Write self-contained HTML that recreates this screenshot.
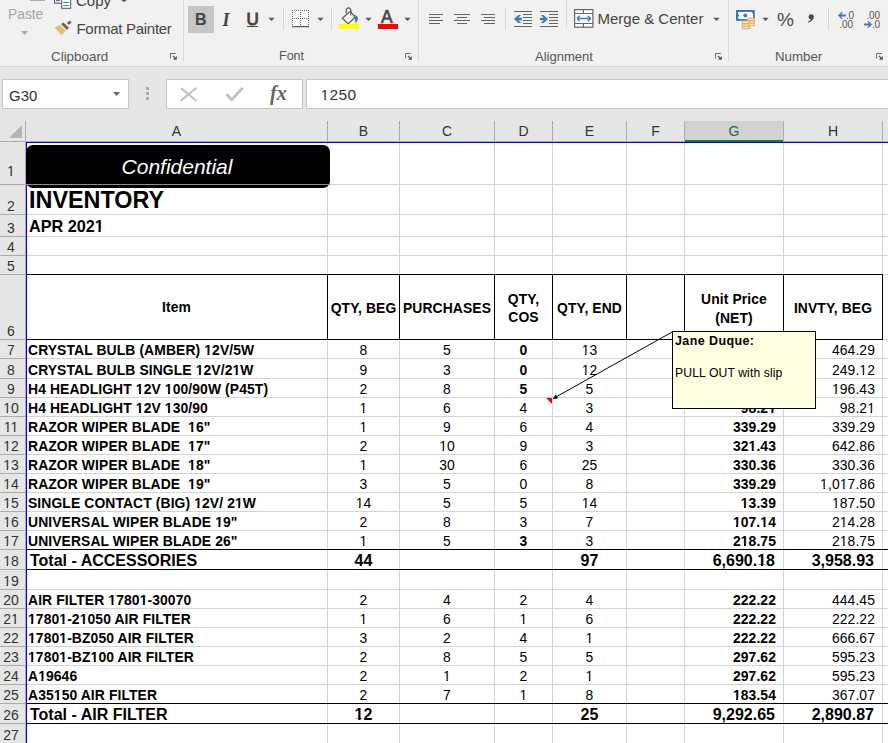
<!DOCTYPE html><html><head><meta charset="utf-8"><style>
*{margin:0;padding:0;box-sizing:border-box}
html,body{width:888px;height:743px;overflow:hidden;background:#fff;position:relative;font-family:"Liberation Sans",sans-serif}
.ab{position:absolute}
.t{position:absolute;white-space:pre;line-height:1}
.c{position:absolute;white-space:pre;font-size:13.9px;letter-spacing:0.1px;color:#000;line-height:14px;height:14px}
.b{font-weight:bold}
.hl{position:absolute;height:1px}
.vl{position:absolute;width:1px}
.o1{clip-path:polygon(0 0,100% 0,100% 0.82em,0.345em 0.82em,0.345em 100%,0.245em 100%,0.245em 0.82em,0 0.82em)}
.o1b{clip-path:polygon(0 0,100% 0,100% 0.775em,0.375em 0.775em,0.375em 100%,0.228em 100%,0.228em 0.775em,0 0.775em)}
</style></head><body>
<div class="ab" style="left:0;top:0;width:888px;height:66px;background:#f1f1f1"></div>
<div class="ab" style="left:0;top:66px;width:888px;height:1px;background:#d5d5d5"></div>
<div class="ab" style="left:0;top:67px;width:888px;height:75px;background:#e6e6e6"></div>
<div class="vl" style="left:183px;top:0;height:62px;background:#d8d8d8"></div>
<div class="vl" style="left:418px;top:0;height:62px;background:#d8d8d8"></div>
<div class="vl" style="left:728px;top:0;height:62px;background:#d8d8d8"></div>
<div class="vl" style="left:283px;top:8px;height:22px;background:#d6d6d6"></div>
<div class="vl" style="left:331px;top:8px;height:22px;background:#d6d6d6"></div>
<div class="vl" style="left:505px;top:8px;height:22px;background:#d6d6d6"></div>
<div class="vl" style="left:566px;top:0px;height:28px;background:#d6d6d6"></div>
<div class="vl" style="left:828px;top:8px;height:22px;background:#d6d6d6"></div>
<div class="ab" style="left:30px;top:0;width:15px;height:1px;background:#a8a8a8"></div>
<div class="t" style="left:8px;top:7.5px;font-size:13.8px;color:#a6a6a6">Paste</div>
<svg class="ab" style="left:21px;top:31px" width="8" height="5"><path d="M0 0H7L3.5 4z" fill="#a8a8a8"/></svg>
<svg class="ab" style="left:53px;top:0px" width="20" height="10"><path d="M1.5 0V3.2H8.5" fill="none" stroke="#555" stroke-width="1"/><rect x="3.1" y="0" width="3.8" height="1.2" fill="#3e7ac1"/><rect x="8.7" y="-2" width="9" height="10.3" fill="#fff" stroke="#555" stroke-width="1"/><path d="M10.3 2.5h5.4M10.3 5.4h5.4" stroke="#3e7ac1" stroke-width="1"/></svg>
<div class="t" style="left:76px;top:-7px;font-size:15px;color:#444">Copy</div>
<svg class="ab" style="left:121px;top:0px" width="6" height="2"><path d="M0 0H6L3 2z" fill="#555"/></svg>
<svg class="ab" style="left:50px;top:16px" width="24" height="22"><path d="M4.4 11.3L9.8 9.1L16 14.7L11.5 19.3z" fill="#e8bd6e"/><path d="M11.1 8.1L13.5 6.4L18.9 11.8L16.9 13.9z" fill="#626262"/><path d="M16.9 7.3L19.4 4.4L21.6 6.4L18.9 8.8z" fill="#626262"/></svg>
<div class="t" style="left:76.5px;top:21.2px;font-size:15px;letter-spacing:-0.3px;color:#444">Format Painter</div>
<div class="t" style="left:51px;top:50px;font-size:13.4px;color:#555">Clipboard</div>
<svg class="ab" style="left:170px;top:53px" width="8" height="8"><path d="M0.5 5.5V0.5H5.8" fill="none" stroke="#6a6a6a" stroke-width="1"/><path d="M3 3L5.5 5.5" stroke="#555" stroke-width="1.2"/><path d="M3 6.8H6.8V3z" fill="#555"/></svg>
<svg class="ab" style="left:405px;top:53px" width="8" height="8"><path d="M0.5 5.5V0.5H5.8" fill="none" stroke="#6a6a6a" stroke-width="1"/><path d="M3 3L5.5 5.5" stroke="#555" stroke-width="1.2"/><path d="M3 6.8H6.8V3z" fill="#555"/></svg>
<svg class="ab" style="left:715px;top:53px" width="8" height="8"><path d="M0.5 5.5V0.5H5.8" fill="none" stroke="#6a6a6a" stroke-width="1"/><path d="M3 3L5.5 5.5" stroke="#555" stroke-width="1.2"/><path d="M3 6.8H6.8V3z" fill="#555"/></svg>
<svg class="ab" style="left:876px;top:53px" width="8" height="8"><path d="M0.5 5.5V0.5H5.8" fill="none" stroke="#6a6a6a" stroke-width="1"/><path d="M3 3L5.5 5.5" stroke="#555" stroke-width="1.2"/><path d="M3 6.8H6.8V3z" fill="#555"/></svg>
<div class="ab" style="left:188px;top:6px;width:26px;height:27px;background:#c5c5c5"></div>
<div class="t b" style="left:195px;top:12px;font-size:16px;color:#444">B</div>
<div class="t b" style="left:222.5px;top:11px;font-size:18px;color:#444;font-style:italic;font-family:'Liberation Serif'">I</div>
<div class="t" style="left:246.5px;top:10.5px;font-size:17px;color:#444;-webkit-text-stroke:0.9px #444">U</div>
<div class="ab" style="left:247px;top:26px;width:11px;height:1px;background:#444"></div>
<svg class="ab" style="left:268px;top:17px" width="8" height="5"><path d="M0.3 0.7H6.7L3.5 3.9z" fill="#555"/></svg>
<svg class="ab" style="left:317px;top:17px" width="8" height="5"><path d="M0.3 0.7H6.7L3.5 3.9z" fill="#555"/></svg>
<svg class="ab" style="left:365px;top:17px" width="8" height="5"><path d="M0.3 0.7H6.7L3.5 3.9z" fill="#555"/></svg>
<svg class="ab" style="left:404px;top:17px" width="8" height="5"><path d="M0.3 0.7H6.7L3.5 3.9z" fill="#555"/></svg>
<svg class="ab" style="left:762px;top:17px" width="8" height="5"><path d="M0.3 0.7H6.7L3.5 3.9z" fill="#555"/></svg>
<svg class="ab" style="left:713px;top:17px" width="8" height="5"><path d="M0.3 0.7H6.7L3.5 3.9z" fill="#555"/></svg>
<svg class="ab" style="left:291px;top:9px" width="19" height="19"><rect x="1" y="1" width="17" height="17" fill="#fff"/><g fill="#666"><path d="M1 1h1v1h-1zM3 1h1v1h-1zM5 1h1v1h-1zM7 1h1v1h-1zM9 1h1v1h-1zM11 1h1v1h-1zM13 1h1v1h-1zM15 1h1v1h-1zM17 1h1v1h-1z"/><path d="M1 3h1v1h-1zM1 5h1v1h-1zM1 7h1v1h-1zM1 9h1v1h-1zM1 11h1v1h-1zM1 13h1v1h-1zM1 15h1v1h-1z"/><path d="M17 3h1v1h-1zM17 5h1v1h-1zM17 7h1v1h-1zM17 9h1v1h-1zM17 11h1v1h-1zM17 13h1v1h-1zM17 15h1v1h-1z"/><path d="M9 3h1v1h-1zM9 5h1v1h-1zM9 7h1v1h-1zM9 11h1v1h-1zM9 13h1v1h-1zM9 15h1v1h-1z"/><path d="M3 9h1v1h-1zM5 9h1v1h-1zM7 9h1v1h-1zM11 9h1v1h-1zM13 9h1v1h-1zM15 9h1v1h-1zM9 9h1v1h-1z"/></g><rect x="1" y="17" width="17" height="1.2" fill="#555"/></svg>
<svg class="ab" style="left:338px;top:4px" width="24" height="26"><path d="M4.3 14.3L12.4 7.3L17.1 13.5L10.2 19.8z" fill="#fff" stroke="#555" stroke-width="1.2" stroke-linejoin="miter"/><path d="M8.2 9.5V6.2a2.3 2.3 0 0 1 4.6 0V11.5" fill="none" stroke="#555" stroke-width="1.2"/><path d="M15.2 10.8C18.5 11 20.5 13 19.8 15.5C19.3 17 18.5 18.3 17.6 19.5L16.6 13.8z" fill="#3c78b9"/><rect x="1" y="20" width="20.2" height="5" fill="#ffff00"/></svg>
<div class="t" style="left:381px;top:9px;font-size:17.5px;color:#444;-webkit-text-stroke:0.6px #444">A</div>
<div class="ab" style="left:378px;top:24px;width:20px;height:5px;background:#ff0000"></div>
<div class="ab" style="left:429px;top:14px;width:14px;height:1px;background:#626262"></div><div class="ab" style="left:429px;top:17px;width:11px;height:1px;background:#626262"></div><div class="ab" style="left:429px;top:20px;width:14px;height:1px;background:#626262"></div><div class="ab" style="left:429px;top:23px;width:11px;height:1px;background:#626262"></div>
<div class="ab" style="left:454px;top:14px;width:16px;height:1px;background:#626262"></div><div class="ab" style="left:457px;top:17px;width:10px;height:1px;background:#626262"></div><div class="ab" style="left:454px;top:20px;width:16px;height:1px;background:#626262"></div><div class="ab" style="left:457px;top:23px;width:10px;height:1px;background:#626262"></div>
<div class="ab" style="left:481px;top:14px;width:14px;height:1px;background:#626262"></div><div class="ab" style="left:484px;top:17px;width:11px;height:1px;background:#626262"></div><div class="ab" style="left:481px;top:20px;width:14px;height:1px;background:#626262"></div><div class="ab" style="left:484px;top:23px;width:11px;height:1px;background:#626262"></div>
<div class="ab" style="left:514px;top:11px;width:18px;height:1px;background:#626262"></div><div class="ab" style="left:523px;top:14px;width:9px;height:1px;background:#626262"></div><div class="ab" style="left:523px;top:17px;width:9px;height:1px;background:#626262"></div><div class="ab" style="left:523px;top:20px;width:9px;height:1px;background:#626262"></div><div class="ab" style="left:523px;top:23px;width:9px;height:1px;background:#626262"></div><div class="ab" style="left:514px;top:26px;width:18px;height:1px;background:#626262"></div><svg class="ab" style="left:514px;top:15px" width="9" height="9"><path d="M0 4L4.4 0H7.2L4.3 2.8H8V5.2H4.3L7.2 8H4.4z" fill="#3c78b9"/></svg>
<div class="ab" style="left:540px;top:11px;width:18px;height:1px;background:#626262"></div><div class="ab" style="left:549px;top:14px;width:9px;height:1px;background:#626262"></div><div class="ab" style="left:549px;top:17px;width:9px;height:1px;background:#626262"></div><div class="ab" style="left:549px;top:20px;width:9px;height:1px;background:#626262"></div><div class="ab" style="left:549px;top:23px;width:9px;height:1px;background:#626262"></div><div class="ab" style="left:540px;top:26px;width:18px;height:1px;background:#626262"></div><svg class="ab" style="left:540px;top:15px" width="9" height="9"><path d="M8 4L3.6 0H0.8L3.7 2.8H0V5.2H3.7L0.8 8H3.6z" fill="#3c78b9"/></svg>
<svg class="ab" style="left:574px;top:9px" width="21" height="19"><rect x="0.6" y="0.6" width="18.3" height="17.6" fill="#fff" stroke="#666" stroke-width="1.2"/><path d="M1 4.5H19M1 14.5H19M9.5 1V4.5M9.5 14.5V18" stroke="#666" stroke-width="1.1"/><path d="M3 9.5H16.5M3 9.5L5.7 6.8M3 9.5L5.7 12.2M16.5 9.5L13.8 6.8M16.5 9.5L13.8 12.2" fill="none" stroke="#3c78b9" stroke-width="1.3"/></svg>
<div class="t" style="left:597.5px;top:11px;font-size:15px;color:#444">Merge &amp; Center</div>
<div class="t" style="left:535px;top:50px;font-size:13px;color:#555">Alignment</div>
<div class="t" style="left:279px;top:50px;font-size:12.5px;color:#555">Font</div>
<div class="t" style="left:775px;top:50px;font-size:13.3px;color:#555">Number</div>
<svg class="ab" style="left:736px;top:10px" width="20" height="20"><rect x="0" y="0" width="18.8" height="10.8" fill="#3c78b9"/><path d="M2.5 2H15.5L17 3.5V7.5L15.5 9H3L1.8 7.8L3.2 5.5L1.8 3.2z" fill="#fff"/><circle cx="9.3" cy="5.4" r="2" fill="#3c78b9"/>
<g fill="#f6e2bb" stroke="#e2b266" stroke-width="1.1"><rect x="11.2" y="13.2" width="7.2" height="2.6" rx="1.3"/><rect x="11.2" y="10.6" width="7.2" height="2.6" rx="1.3"/><rect x="11.2" y="8" width="7.2" height="2.6" rx="1.3"/><rect x="6" y="16.2" width="7.6" height="2.6" rx="1.3"/><rect x="6" y="13.6" width="7.6" height="2.6" rx="1.3"/><rect x="6" y="11" width="7.6" height="2.6" rx="1.3"/></g></svg>
<div class="t" style="left:777px;top:9.5px;font-size:19px;color:#4a4a4a">%</div>
<svg class="ab" style="left:806px;top:13px" width="9" height="11"><path d="M5.2 1.2a2.6 2.6 0 0 1 2.6 2.6C7.8 6.5 5.5 8.6 2.2 9.8L1.8 8.9C3.6 8 4.6 7 4.9 6.2A2.5 2.5 0 0 1 5.2 1.2z" fill="#4a4a4a"/></svg>
<div class="t" style="left:846px;top:10.5px;font-size:10px;color:#555;letter-spacing:-0.2px">.0</div>
<div class="t" style="left:839.5px;top:19.5px;font-size:10px;color:#555;letter-spacing:-0.2px">.00</div>
<svg class="ab" style="left:838px;top:12px" width="8" height="7"><path d="M0 3.5L3.3 0.3H5L3 2.5H8V4.5H3L5 6.7H3.3z" fill="#3c78b9"/></svg>
<div class="t" style="left:866.5px;top:10.5px;font-size:10px;color:#555;letter-spacing:-0.2px">.00</div>
<div class="t" style="left:872px;top:19.5px;font-size:10px;color:#555;letter-spacing:-0.2px">.0</div>
<svg class="ab" style="left:864px;top:21px" width="8" height="7"><path d="M8 3.5L4.7 0.3H3L5 2.5H0V4.5H5L3 6.7H4.7z" fill="#3c78b9"/></svg>
<div class="ab" style="left:2px;top:79px;width:127px;height:30px;background:#fff;border:1px solid #c6c6c6"></div>
<div class="t" style="left:9px;top:88px;font-size:15px;color:#333">G30</div>
<svg class="ab" style="left:113px;top:92px" width="8" height="5"><path d="M0 0H7L3.5 4z" fill="#666"/></svg>
<div class="ab" style="left:146px;top:87px;width:3px;height:3px;background:#a8a8a8"></div>
<div class="ab" style="left:146px;top:92px;width:3px;height:3px;background:#a8a8a8"></div>
<div class="ab" style="left:146px;top:97px;width:3px;height:3px;background:#a8a8a8"></div>
<div class="ab" style="left:166px;top:79px;width:137px;height:30px;background:#fff;border:1px solid #c6c6c6"></div>
<svg class="ab" style="left:180px;top:87px" width="17" height="15"><path d="M2 1.8L15.8 13.5M15.5 1.5L1.5 13.2" stroke="#c2c2c2" stroke-width="2.2" stroke-linecap="round"/></svg>
<svg class="ab" style="left:225px;top:86px" width="19" height="16"><path d="M1.5 8.2L6.8 13.8L17.8 1.8" fill="none" stroke="#c2c2c2" stroke-width="2.8"/></svg>
<div class="t b" style="left:270px;top:82.5px;font-size:20px;color:#666;font-style:italic;font-family:'Liberation Serif'">fx</div>
<div class="ab" style="left:306px;top:79px;width:590px;height:30px;background:#fff;border:1px solid #c6c6c6"></div>
<div class="t" style="left:320.5px;top:86.5px;font-size:15.5px;letter-spacing:0.4px;color:#333"><span class="o1">1</span>250</div>
<div class="ab" style="left:0;top:121px;width:888px;height:20px;background:#e6e6e6"></div>
<div class="ab" style="left:684px;top:121px;width:100px;height:20px;background:#d2d2d2"></div>
<div class="ab" style="left:685px;top:140px;width:98px;height:2px;background:#217346"></div>
<div class="hl" style="left:0;top:141px;width:888px;background:#ababab"></div>
<div class="hl" style="left:685px;top:141px;width:98px;background:#217346"></div>
<svg class="ab" style="left:9px;top:125px" width="14" height="14"><path d="M13 0V13H0z" fill="#b4b4b4"/></svg>
<div class="vl" style="left:25px;top:121px;height:20px;background:#ababab"></div>
<div class="vl" style="left:327px;top:121px;height:20px;background:#ababab"></div>
<div class="vl" style="left:399px;top:121px;height:20px;background:#ababab"></div>
<div class="vl" style="left:494px;top:121px;height:20px;background:#ababab"></div>
<div class="vl" style="left:552px;top:121px;height:20px;background:#ababab"></div>
<div class="vl" style="left:626px;top:121px;height:20px;background:#ababab"></div>
<div class="vl" style="left:684px;top:121px;height:20px;background:#ababab"></div>
<div class="vl" style="left:783px;top:121px;height:20px;background:#ababab"></div>
<div class="vl" style="left:882px;top:121px;height:20px;background:#ababab"></div>
<div class="t" style="left:26px;width:301px;top:124px;text-align:center;font-size:14px;color:#333">A</div>
<div class="t" style="left:328px;width:71px;top:124px;text-align:center;font-size:14px;color:#333">B</div>
<div class="t" style="left:400px;width:94px;top:124px;text-align:center;font-size:14px;color:#333">C</div>
<div class="t" style="left:495px;width:57px;top:124px;text-align:center;font-size:14px;color:#333">D</div>
<div class="t" style="left:553px;width:73px;top:124px;text-align:center;font-size:14px;color:#333">E</div>
<div class="t" style="left:627px;width:57px;top:124px;text-align:center;font-size:14px;color:#333">F</div>
<div class="t" style="left:685px;width:98px;top:124px;text-align:center;font-size:14px;color:#1d6b3a">G</div>
<div class="t" style="left:784px;width:98px;top:124px;text-align:center;font-size:14px;color:#333">H</div>
<div class="t" style="left:883px;width:17px;top:124px;text-align:center;font-size:14px;color:#333">I</div>
<div class="ab" style="left:0;top:142px;width:25px;height:601px;background:#e6e6e6"></div>
<div class="vl" style="left:25px;top:142px;height:601px;background:#ababab"></div>
<div class="hl" style="left:0;top:184px;width:25px;background:#ababab"></div>
<div class="t" style="left:-1.5px;width:25px;top:164.2px;text-align:center;font-size:14px;color:#333"><span class="o1">1</span></div>
<div class="hl" style="left:0;top:214px;width:25px;background:#ababab"></div>
<div class="t" style="left:-1.5px;width:25px;top:199.2px;text-align:center;font-size:14px;color:#333">2</div>
<div class="hl" style="left:0;top:236px;width:25px;background:#ababab"></div>
<div class="t" style="left:-1.5px;width:25px;top:221.2px;text-align:center;font-size:14px;color:#333">3</div>
<div class="hl" style="left:0;top:255px;width:25px;background:#ababab"></div>
<div class="t" style="left:-1.5px;width:25px;top:240.2px;text-align:center;font-size:14px;color:#333">4</div>
<div class="hl" style="left:0;top:274px;width:25px;background:#ababab"></div>
<div class="t" style="left:-1.5px;width:25px;top:259.2px;text-align:center;font-size:14px;color:#333">5</div>
<div class="hl" style="left:0;top:339px;width:25px;background:#ababab"></div>
<div class="t" style="left:-1.5px;width:25px;top:324.2px;text-align:center;font-size:14px;color:#333">6</div>
<div class="hl" style="left:0;top:358px;width:25px;background:#ababab"></div>
<div class="t" style="left:-1.5px;width:25px;top:343.2px;text-align:center;font-size:14px;color:#333">7</div>
<div class="hl" style="left:0;top:378px;width:25px;background:#ababab"></div>
<div class="t" style="left:-1.5px;width:25px;top:363.2px;text-align:center;font-size:14px;color:#333">8</div>
<div class="hl" style="left:0;top:397px;width:25px;background:#ababab"></div>
<div class="t" style="left:-1.5px;width:25px;top:382.2px;text-align:center;font-size:14px;color:#333">9</div>
<div class="hl" style="left:0;top:416px;width:25px;background:#ababab"></div>
<div class="t" style="left:-1.5px;width:25px;top:401.2px;text-align:center;font-size:14px;color:#333"><span class="o1">1</span>0</div>
<div class="hl" style="left:0;top:435px;width:25px;background:#ababab"></div>
<div class="t" style="left:-1.5px;width:25px;top:420.2px;text-align:center;font-size:14px;color:#333"><span class="o1">1</span><span class="o1">1</span></div>
<div class="hl" style="left:0;top:454px;width:25px;background:#ababab"></div>
<div class="t" style="left:-1.5px;width:25px;top:439.2px;text-align:center;font-size:14px;color:#333"><span class="o1">1</span>2</div>
<div class="hl" style="left:0;top:473px;width:25px;background:#ababab"></div>
<div class="t" style="left:-1.5px;width:25px;top:458.2px;text-align:center;font-size:14px;color:#333"><span class="o1">1</span>3</div>
<div class="hl" style="left:0;top:492px;width:25px;background:#ababab"></div>
<div class="t" style="left:-1.5px;width:25px;top:477.2px;text-align:center;font-size:14px;color:#333"><span class="o1">1</span>4</div>
<div class="hl" style="left:0;top:511px;width:25px;background:#ababab"></div>
<div class="t" style="left:-1.5px;width:25px;top:496.2px;text-align:center;font-size:14px;color:#333"><span class="o1">1</span>5</div>
<div class="hl" style="left:0;top:530px;width:25px;background:#ababab"></div>
<div class="t" style="left:-1.5px;width:25px;top:515.2px;text-align:center;font-size:14px;color:#333"><span class="o1">1</span>6</div>
<div class="hl" style="left:0;top:549px;width:25px;background:#ababab"></div>
<div class="t" style="left:-1.5px;width:25px;top:534.2px;text-align:center;font-size:14px;color:#333"><span class="o1">1</span>7</div>
<div class="hl" style="left:0;top:569px;width:25px;background:#ababab"></div>
<div class="t" style="left:-1.5px;width:25px;top:554.2px;text-align:center;font-size:14px;color:#333"><span class="o1">1</span>8</div>
<div class="hl" style="left:0;top:589px;width:25px;background:#ababab"></div>
<div class="t" style="left:-1.5px;width:25px;top:574.2px;text-align:center;font-size:14px;color:#333"><span class="o1">1</span>9</div>
<div class="hl" style="left:0;top:608px;width:25px;background:#ababab"></div>
<div class="t" style="left:-1.5px;width:25px;top:593.2px;text-align:center;font-size:14px;color:#333">20</div>
<div class="hl" style="left:0;top:627px;width:25px;background:#ababab"></div>
<div class="t" style="left:-1.5px;width:25px;top:612.2px;text-align:center;font-size:14px;color:#333">2<span class="o1">1</span></div>
<div class="hl" style="left:0;top:646px;width:25px;background:#ababab"></div>
<div class="t" style="left:-1.5px;width:25px;top:631.2px;text-align:center;font-size:14px;color:#333">22</div>
<div class="hl" style="left:0;top:665px;width:25px;background:#ababab"></div>
<div class="t" style="left:-1.5px;width:25px;top:650.2px;text-align:center;font-size:14px;color:#333">23</div>
<div class="hl" style="left:0;top:684px;width:25px;background:#ababab"></div>
<div class="t" style="left:-1.5px;width:25px;top:669.2px;text-align:center;font-size:14px;color:#333">24</div>
<div class="hl" style="left:0;top:703px;width:25px;background:#ababab"></div>
<div class="t" style="left:-1.5px;width:25px;top:688.2px;text-align:center;font-size:14px;color:#333">25</div>
<div class="hl" style="left:0;top:723px;width:25px;background:#ababab"></div>
<div class="t" style="left:-1.5px;width:25px;top:708.2px;text-align:center;font-size:14px;color:#333">26</div>
<div class="t" style="left:-1.5px;width:25px;top:728.2px;text-align:center;font-size:14px;color:#333">27</div>
<div class="hl" style="left:26px;top:184px;width:862px;background:#d4d4d4"></div>
<div class="hl" style="left:26px;top:214px;width:862px;background:#d4d4d4"></div>
<div class="hl" style="left:26px;top:236px;width:862px;background:#d4d4d4"></div>
<div class="hl" style="left:26px;top:255px;width:862px;background:#d4d4d4"></div>
<div class="hl" style="left:26px;top:274px;width:862px;background:#d4d4d4"></div>
<div class="hl" style="left:26px;top:339px;width:862px;background:#d4d4d4"></div>
<div class="hl" style="left:26px;top:358px;width:862px;background:#d4d4d4"></div>
<div class="hl" style="left:26px;top:378px;width:862px;background:#d4d4d4"></div>
<div class="hl" style="left:26px;top:397px;width:862px;background:#d4d4d4"></div>
<div class="hl" style="left:26px;top:416px;width:862px;background:#d4d4d4"></div>
<div class="hl" style="left:26px;top:435px;width:862px;background:#d4d4d4"></div>
<div class="hl" style="left:26px;top:454px;width:862px;background:#d4d4d4"></div>
<div class="hl" style="left:26px;top:473px;width:862px;background:#d4d4d4"></div>
<div class="hl" style="left:26px;top:492px;width:862px;background:#d4d4d4"></div>
<div class="hl" style="left:26px;top:511px;width:862px;background:#d4d4d4"></div>
<div class="hl" style="left:26px;top:530px;width:862px;background:#d4d4d4"></div>
<div class="hl" style="left:26px;top:549px;width:862px;background:#d4d4d4"></div>
<div class="hl" style="left:26px;top:569px;width:862px;background:#d4d4d4"></div>
<div class="hl" style="left:26px;top:589px;width:862px;background:#d4d4d4"></div>
<div class="hl" style="left:26px;top:608px;width:862px;background:#d4d4d4"></div>
<div class="hl" style="left:26px;top:627px;width:862px;background:#d4d4d4"></div>
<div class="hl" style="left:26px;top:646px;width:862px;background:#d4d4d4"></div>
<div class="hl" style="left:26px;top:665px;width:862px;background:#d4d4d4"></div>
<div class="hl" style="left:26px;top:684px;width:862px;background:#d4d4d4"></div>
<div class="hl" style="left:26px;top:703px;width:862px;background:#d4d4d4"></div>
<div class="hl" style="left:26px;top:723px;width:862px;background:#d4d4d4"></div>
<div class="vl" style="left:327px;top:142px;height:601px;background:#d4d4d4"></div>
<div class="vl" style="left:399px;top:142px;height:601px;background:#d4d4d4"></div>
<div class="vl" style="left:494px;top:142px;height:601px;background:#d4d4d4"></div>
<div class="vl" style="left:552px;top:142px;height:601px;background:#d4d4d4"></div>
<div class="vl" style="left:626px;top:142px;height:601px;background:#d4d4d4"></div>
<div class="vl" style="left:684px;top:142px;height:601px;background:#d4d4d4"></div>
<div class="vl" style="left:783px;top:142px;height:601px;background:#d4d4d4"></div>
<div class="vl" style="left:882px;top:142px;height:601px;background:#d4d4d4"></div>
<div class="hl" style="left:26px;top:274px;width:857px;background:#000"></div>
<div class="hl" style="left:26px;top:339px;width:857px;background:#000"></div>
<div class="vl" style="left:327px;top:274px;height:66px;background:#000"></div>
<div class="vl" style="left:399px;top:274px;height:66px;background:#000"></div>
<div class="vl" style="left:494px;top:274px;height:66px;background:#000"></div>
<div class="vl" style="left:552px;top:274px;height:66px;background:#000"></div>
<div class="vl" style="left:626px;top:274px;height:66px;background:#000"></div>
<div class="vl" style="left:684px;top:274px;height:66px;background:#000"></div>
<div class="vl" style="left:783px;top:274px;height:66px;background:#000"></div>
<div class="vl" style="left:882px;top:274px;height:66px;background:#000"></div>
<div class="hl" style="left:26px;top:549px;width:862px;background:#000"></div>
<div class="hl" style="left:26px;top:569px;width:862px;background:#000"></div>
<div class="hl" style="left:26px;top:703px;width:862px;background:#000"></div>
<div class="hl" style="left:26px;top:723px;width:862px;background:#000"></div>
<div class="hl" style="left:26px;top:142px;width:862px;background:#0000ff"></div>
<div class="vl" style="left:26px;top:142px;height:601px;background:#0000ff"></div>
<div class="c b" style="left:28px;top:343px;">CRYSTAL BULB (AMBER) <span class="o1b">1</span>2V/5W</div>
<div class="c" style="left:328px;width:71px;text-align:center;top:343px;">8</div>
<div class="c" style="left:400px;width:94px;text-align:center;top:343px;">5</div>
<div class="c b" style="left:495px;width:57px;text-align:center;top:343px;">0</div>
<div class="c" style="left:553px;width:73px;text-align:center;top:343px;"><span class="o1">1</span>3</div>
<div class="c b" style="right:112px;text-align:right;top:343px;">464.29</div>
<div class="c" style="right:13px;text-align:right;top:343px;">464.29</div>
<div class="c b" style="left:28px;top:363px;">CRYSTAL BULB SINGLE <span class="o1b">1</span>2V/2<span class="o1b">1</span>W</div>
<div class="c" style="left:328px;width:71px;text-align:center;top:363px;">9</div>
<div class="c" style="left:400px;width:94px;text-align:center;top:363px;">3</div>
<div class="c b" style="left:495px;width:57px;text-align:center;top:363px;">0</div>
<div class="c" style="left:553px;width:73px;text-align:center;top:363px;"><span class="o1">1</span>2</div>
<div class="c b" style="right:112px;text-align:right;top:363px;">249.<span class="o1b">1</span>2</div>
<div class="c" style="right:13px;text-align:right;top:363px;">249.<span class="o1">1</span>2</div>
<div class="c b" style="left:28px;top:382px;">H4 HEADLIGHT <span class="o1b">1</span>2V <span class="o1b">1</span>00/90W (P45T)</div>
<div class="c" style="left:328px;width:71px;text-align:center;top:382px;">2</div>
<div class="c" style="left:400px;width:94px;text-align:center;top:382px;">8</div>
<div class="c b" style="left:495px;width:57px;text-align:center;top:382px;">5</div>
<div class="c" style="left:553px;width:73px;text-align:center;top:382px;">5</div>
<div class="c b" style="right:112px;text-align:right;top:382px;"><span class="o1b">1</span>96.43</div>
<div class="c" style="right:13px;text-align:right;top:382px;"><span class="o1">1</span>96.43</div>
<div class="c b" style="left:28px;top:401px;">H4 HEADLIGHT <span class="o1b">1</span>2V <span class="o1b">1</span>30/90</div>
<div class="c" style="left:328px;width:71px;text-align:center;top:401px;"><span class="o1">1</span></div>
<div class="c" style="left:400px;width:94px;text-align:center;top:401px;">6</div>
<div class="c" style="left:495px;width:57px;text-align:center;top:401px;">4</div>
<div class="c" style="left:553px;width:73px;text-align:center;top:401px;">3</div>
<div class="c b" style="right:112px;text-align:right;top:401px;">98.2<span class="o1b">1</span></div>
<div class="c" style="right:13px;text-align:right;top:401px;">98.2<span class="o1">1</span></div>
<div class="c b" style="left:28px;top:420px;">RAZOR WIPER BLADE  <span class="o1b">1</span>6"</div>
<div class="c" style="left:328px;width:71px;text-align:center;top:420px;"><span class="o1">1</span></div>
<div class="c" style="left:400px;width:94px;text-align:center;top:420px;">9</div>
<div class="c" style="left:495px;width:57px;text-align:center;top:420px;">6</div>
<div class="c" style="left:553px;width:73px;text-align:center;top:420px;">4</div>
<div class="c b" style="right:112px;text-align:right;top:420px;">339.29</div>
<div class="c" style="right:13px;text-align:right;top:420px;">339.29</div>
<div class="c b" style="left:28px;top:439px;">RAZOR WIPER BLADE  <span class="o1b">1</span>7"</div>
<div class="c" style="left:328px;width:71px;text-align:center;top:439px;">2</div>
<div class="c" style="left:400px;width:94px;text-align:center;top:439px;"><span class="o1">1</span>0</div>
<div class="c" style="left:495px;width:57px;text-align:center;top:439px;">9</div>
<div class="c" style="left:553px;width:73px;text-align:center;top:439px;">3</div>
<div class="c b" style="right:112px;text-align:right;top:439px;">32<span class="o1b">1</span>.43</div>
<div class="c" style="right:13px;text-align:right;top:439px;">642.86</div>
<div class="c b" style="left:28px;top:458px;">RAZOR WIPER BLADE  <span class="o1b">1</span>8"</div>
<div class="c" style="left:328px;width:71px;text-align:center;top:458px;"><span class="o1">1</span></div>
<div class="c" style="left:400px;width:94px;text-align:center;top:458px;">30</div>
<div class="c" style="left:495px;width:57px;text-align:center;top:458px;">6</div>
<div class="c" style="left:553px;width:73px;text-align:center;top:458px;">25</div>
<div class="c b" style="right:112px;text-align:right;top:458px;">330.36</div>
<div class="c" style="right:13px;text-align:right;top:458px;">330.36</div>
<div class="c b" style="left:28px;top:477px;">RAZOR WIPER BLADE  <span class="o1b">1</span>9"</div>
<div class="c" style="left:328px;width:71px;text-align:center;top:477px;">3</div>
<div class="c" style="left:400px;width:94px;text-align:center;top:477px;">5</div>
<div class="c" style="left:495px;width:57px;text-align:center;top:477px;">0</div>
<div class="c" style="left:553px;width:73px;text-align:center;top:477px;">8</div>
<div class="c b" style="right:112px;text-align:right;top:477px;">339.29</div>
<div class="c" style="right:13px;text-align:right;top:477px;"><span class="o1">1</span>,0<span class="o1">1</span>7.86</div>
<div class="c b" style="left:28px;top:496px;">SINGLE CONTACT (BIG) <span class="o1b">1</span>2V/ 2<span class="o1b">1</span>W</div>
<div class="c" style="left:328px;width:71px;text-align:center;top:496px;"><span class="o1">1</span>4</div>
<div class="c" style="left:400px;width:94px;text-align:center;top:496px;">5</div>
<div class="c" style="left:495px;width:57px;text-align:center;top:496px;">5</div>
<div class="c" style="left:553px;width:73px;text-align:center;top:496px;"><span class="o1">1</span>4</div>
<div class="c b" style="right:112px;text-align:right;top:496px;"><span class="o1b">1</span>3.39</div>
<div class="c" style="right:13px;text-align:right;top:496px;"><span class="o1">1</span>87.50</div>
<div class="c b" style="left:28px;top:515px;">UNIVERSAL WIPER BLADE <span class="o1b">1</span>9"</div>
<div class="c" style="left:328px;width:71px;text-align:center;top:515px;">2</div>
<div class="c" style="left:400px;width:94px;text-align:center;top:515px;">8</div>
<div class="c" style="left:495px;width:57px;text-align:center;top:515px;">3</div>
<div class="c" style="left:553px;width:73px;text-align:center;top:515px;">7</div>
<div class="c b" style="right:112px;text-align:right;top:515px;"><span class="o1b">1</span>07.<span class="o1b">1</span>4</div>
<div class="c" style="right:13px;text-align:right;top:515px;">2<span class="o1">1</span>4.28</div>
<div class="c b" style="left:28px;top:534px;">UNIVERSAL WIPER BLADE 26"</div>
<div class="c" style="left:328px;width:71px;text-align:center;top:534px;"><span class="o1">1</span></div>
<div class="c" style="left:400px;width:94px;text-align:center;top:534px;">5</div>
<div class="c b" style="left:495px;width:57px;text-align:center;top:534px;">3</div>
<div class="c" style="left:553px;width:73px;text-align:center;top:534px;">3</div>
<div class="c b" style="right:112px;text-align:right;top:534px;">2<span class="o1b">1</span>8.75</div>
<div class="c" style="right:13px;text-align:right;top:534px;">2<span class="o1">1</span>8.75</div>
<div class="c b" style="left:28px;top:593px;">AIR FILTER <span class="o1b">1</span>780<span class="o1b">1</span>-30070</div>
<div class="c" style="left:328px;width:71px;text-align:center;top:593px;">2</div>
<div class="c" style="left:400px;width:94px;text-align:center;top:593px;">4</div>
<div class="c" style="left:495px;width:57px;text-align:center;top:593px;">2</div>
<div class="c" style="left:553px;width:73px;text-align:center;top:593px;">4</div>
<div class="c b" style="right:112px;text-align:right;top:593px;">222.22</div>
<div class="c" style="right:13px;text-align:right;top:593px;">444.45</div>
<div class="c b" style="left:28px;top:612px;"><span class="o1b">1</span>780<span class="o1b">1</span>-2<span class="o1b">1</span>050 AIR FILTER</div>
<div class="c" style="left:328px;width:71px;text-align:center;top:612px;"><span class="o1">1</span></div>
<div class="c" style="left:400px;width:94px;text-align:center;top:612px;">6</div>
<div class="c" style="left:495px;width:57px;text-align:center;top:612px;"><span class="o1">1</span></div>
<div class="c" style="left:553px;width:73px;text-align:center;top:612px;">6</div>
<div class="c b" style="right:112px;text-align:right;top:612px;">222.22</div>
<div class="c" style="right:13px;text-align:right;top:612px;">222.22</div>
<div class="c b" style="left:28px;top:631px;"><span class="o1b">1</span>780<span class="o1b">1</span>-BZ050 AIR FILTER</div>
<div class="c" style="left:328px;width:71px;text-align:center;top:631px;">3</div>
<div class="c" style="left:400px;width:94px;text-align:center;top:631px;">2</div>
<div class="c" style="left:495px;width:57px;text-align:center;top:631px;">4</div>
<div class="c" style="left:553px;width:73px;text-align:center;top:631px;"><span class="o1">1</span></div>
<div class="c b" style="right:112px;text-align:right;top:631px;">222.22</div>
<div class="c" style="right:13px;text-align:right;top:631px;">666.67</div>
<div class="c b" style="left:28px;top:650px;"><span class="o1b">1</span>780<span class="o1b">1</span>-BZ<span class="o1b">1</span>00 AIR FILTER</div>
<div class="c" style="left:328px;width:71px;text-align:center;top:650px;">2</div>
<div class="c" style="left:400px;width:94px;text-align:center;top:650px;">8</div>
<div class="c" style="left:495px;width:57px;text-align:center;top:650px;">5</div>
<div class="c" style="left:553px;width:73px;text-align:center;top:650px;">5</div>
<div class="c b" style="right:112px;text-align:right;top:650px;">297.62</div>
<div class="c" style="right:13px;text-align:right;top:650px;">595.23</div>
<div class="c b" style="left:28px;top:669px;">A<span class="o1b">1</span>9646</div>
<div class="c" style="left:328px;width:71px;text-align:center;top:669px;">2</div>
<div class="c" style="left:400px;width:94px;text-align:center;top:669px;"><span class="o1">1</span></div>
<div class="c" style="left:495px;width:57px;text-align:center;top:669px;">2</div>
<div class="c" style="left:553px;width:73px;text-align:center;top:669px;"><span class="o1">1</span></div>
<div class="c b" style="right:112px;text-align:right;top:669px;">297.62</div>
<div class="c" style="right:13px;text-align:right;top:669px;">595.23</div>
<div class="c b" style="left:28px;top:688px;">A35<span class="o1b">1</span>50 AIR FILTER</div>
<div class="c" style="left:328px;width:71px;text-align:center;top:688px;">2</div>
<div class="c" style="left:400px;width:94px;text-align:center;top:688px;">7</div>
<div class="c" style="left:495px;width:57px;text-align:center;top:688px;"><span class="o1">1</span></div>
<div class="c" style="left:553px;width:73px;text-align:center;top:688px;">8</div>
<div class="c b" style="right:112px;text-align:right;top:688px;"><span class="o1b">1</span>83.54</div>
<div class="c" style="right:13px;text-align:right;top:688px;">367.07</div>
<div class="c b" style="font-size:16px;line-height:16px;height:16px;left:30px;top:553px;letter-spacing:0">Total - ACCESSORIES</div>
<div class="c b" style="font-size:16px;line-height:16px;height:16px;left:328px;width:71px;text-align:center;top:553px;letter-spacing:0">44</div>
<div class="c b" style="font-size:16px;line-height:16px;height:16px;left:553px;width:73px;text-align:center;top:553px;letter-spacing:0">97</div>
<div class="c b" style="font-size:16px;line-height:16px;height:16px;right:113px;text-align:right;top:553px;letter-spacing:0">6,690.<span class="o1b">1</span>8</div>
<div class="c b" style="font-size:16px;line-height:16px;height:16px;right:14px;text-align:right;top:553px;letter-spacing:0">3,958.93</div>
<div class="c b" style="font-size:16px;line-height:16px;height:16px;left:30px;top:707px;letter-spacing:0">Total - AIR FILTER</div>
<div class="c b" style="font-size:16px;line-height:16px;height:16px;left:328px;width:71px;text-align:center;top:707px;letter-spacing:0"><span class="o1b">1</span>2</div>
<div class="c b" style="font-size:16px;line-height:16px;height:16px;left:553px;width:73px;text-align:center;top:707px;letter-spacing:0">25</div>
<div class="c b" style="font-size:16px;line-height:16px;height:16px;right:113px;text-align:right;top:707px;letter-spacing:0">9,292.65</div>
<div class="c b" style="font-size:16px;line-height:16px;height:16px;right:14px;text-align:right;top:707px;letter-spacing:0">2,890.87</div>
<div class="c b" style="left:26px;width:301px;text-align:center;top:300px">Item</div>
<div class="c b" style="left:328px;width:71px;text-align:center;top:301px">QTY, BEG</div>
<div class="c b" style="left:400px;width:94px;text-align:center;top:301px">PURCHASES</div>
<div class="c b" style="left:495px;width:57px;text-align:center;top:292px">QTY,</div>
<div class="c b" style="left:495px;width:57px;text-align:center;top:310px">COS</div>
<div class="c b" style="left:553px;width:73px;text-align:center;top:301px">QTY, END</div>
<div class="c b" style="left:685px;width:98px;text-align:center;top:291.5px">Unit Price</div>
<div class="c b" style="left:685px;width:98px;text-align:center;top:310.5px">(NET)</div>
<div class="c b" style="left:784px;width:98px;text-align:center;top:300.5px">INVTY, BEG</div>
<div class="ab" style="left:26px;top:145px;width:304px;height:43px;background:#000;border-radius:7px"></div>
<div class="hl" style="left:26px;top:184px;width:304px;background:#8c8c8c"></div>
<div class="t" style="left:25px;width:304px;text-align:center;top:156px;font-size:21px;font-style:italic;color:#fff">Confidential</div>
<div class="t b" style="left:29px;top:189px;font-size:23.4px;color:#000">INVENTORY</div>
<div class="t b" style="left:29px;top:218px;font-size:16.2px;color:#000">APR 202<span class="o1b">1</span></div>
<svg class="ab" style="left:546px;top:398px" width="7" height="7"><path d="M0 0H6V6z" fill="#ff0000"/></svg>
<svg class="ab" style="left:540px;top:325px" width="140" height="80"><line x1="15" y1="72.5" x2="133" y2="6.5" stroke="#000" stroke-width="1"/><path d="M12.8 74L15.8 69.6L18 73.4z" fill="#000"/></svg>
<div class="ab" style="left:672px;top:331px;width:144px;height:78px;background:#ffffe1;border:1px solid #000"></div>
<div class="t b" style="left:675px;top:335px;font-size:12.5px;letter-spacing:0.4px;color:#000">Jane Duque:</div>
<div class="t" style="left:675px;top:367px;font-size:12.2px;letter-spacing:0.1px;color:#000">PULL OUT with slip</div>
</body></html>
